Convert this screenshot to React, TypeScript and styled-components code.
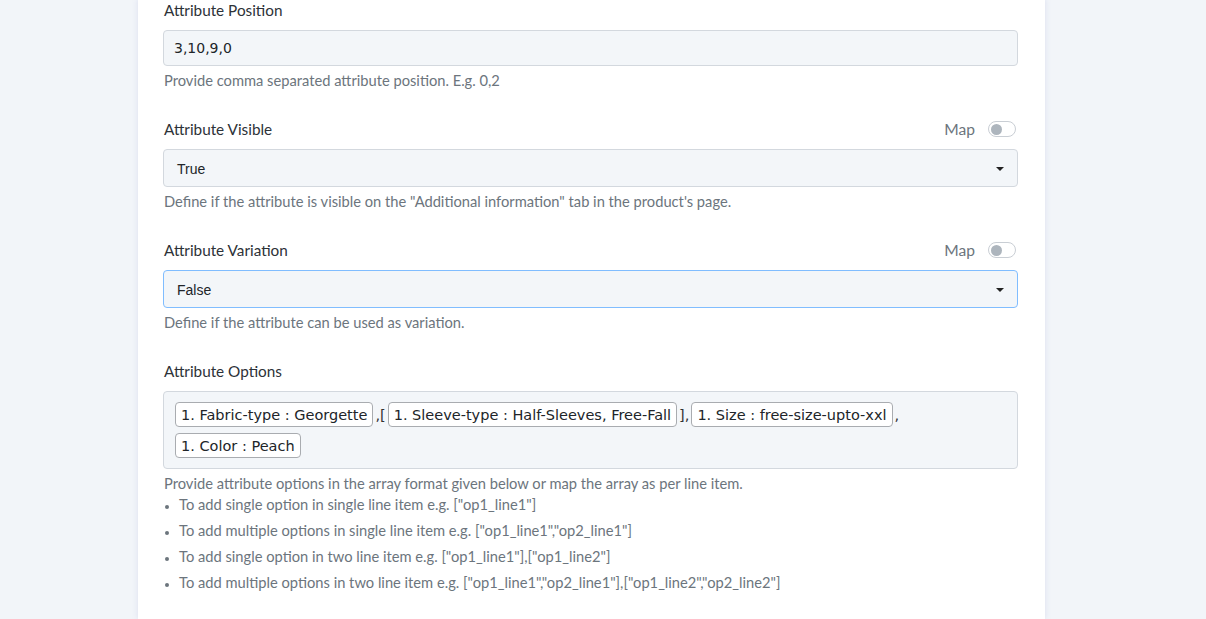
import { Fragment } from "react";
import styled, { createGlobalStyle } from "styled-components";

const GlobalStyle = createGlobalStyle`
  html, body {
    margin: 0;
    padding: 0;
    background: #f2f5f9;
    font-family: Lato, "Open Sans", Arial, sans-serif;
    overflow: hidden;
  }
  * {
    box-sizing: border-box;
  }
`;

const Page = styled.div`
  width: 100%;
  height: 619px;
  display: flex;
`;

const Card = styled.div`
  width: 907px;
  margin-left: 138px;
  margin-top: -1px;
  background: #ffffff;
  box-shadow: 0 0 6px rgba(120, 130, 200, 0.18);
  padding: 0 27px 0 25px;
`;

const Group = styled.div`
  margin-bottom: 27px;
`;

const LabelRow = styled.div`
  display: flex;
  align-items: center;
  justify-content: space-between;
  height: 22px;
  margin-bottom: 9px;
`;

const Label = styled.label`
  font-size: 15.3px;
  line-height: 22px;
  color: #2d3238;
  padding-left: 1px;
`;

const MapSwitch = styled.div`
  display: flex;
  align-items: center;
  gap: 13px;
  padding-right: 2px;
  font-size: 15.6px;
  color: #6c757d;
`;

const Track = styled.span`
  width: 28px;
  height: 16px;
  border: 1px solid #c9ced4;
  border-radius: 8px;
  background: #ffffff;
  display: flex;
  align-items: center;
  padding-left: 2px;
`;

const Knob = styled.span`
  width: 11px;
  height: 11px;
  border-radius: 50%;
  background: #adb5bd;
`;

const TextInput = styled.div`
  height: 36px;
  display: flex;
  align-items: center;
  padding: 0 10px;
  border: 1px solid #d3d8de;
  border-radius: 4px;
  background: #f3f6f9;
  font-family: "DejaVu Sans", Verdana, sans-serif;
  font-size: 14px;
  color: #212529;
`;

const Select = styled.div<{ $focused?: boolean }>`
  height: 38px;
  display: flex;
  align-items: center;
  justify-content: space-between;
  padding: 1px 13px 0 13px;
  border: 1px solid ${({ $focused }) => ($focused ? "#80bdff" : "#d3d8de")};
  border-radius: 4px;
  background: #f3f6f9;
  font-family: "Liberation Sans", Arial, sans-serif;
  font-size: 14px;
  color: #212529;
`;

const Caret = styled.span`
  width: 0;
  height: 0;
  border-left: 4px solid transparent;
  border-right: 4px solid transparent;
  border-top: 4px solid #222;
`;

const Help = styled.div`
  margin-top: 4px;
  font-size: 14.7px;
  line-height: 21px;
  color: #6c757d;
  padding-left: 1px;
`;

const TagBox = styled.div`
  min-height: 78px;
  border: 1px solid #d3d8de;
  border-radius: 4px;
  background: #f3f6f9;
  padding: 10px 11px;
  display: flex;
  flex-wrap: wrap;
  align-items: center;
  align-content: flex-start;
  column-gap: 2px;
  row-gap: 6px;
  font-family: "DejaVu Sans", Verdana, sans-serif;
  font-size: 14.5px;
  color: #212529;
`;

const Tag = styled.span`
  height: 25px;
  display: inline-flex;
  align-items: center;
  padding: 0 5px;
  border: 1px solid #a9acb0;
  border-radius: 4px;
  background: #ffffff;
`;

const Sep = styled.span`
  color: #333;
`;

const List = styled.ul`
  margin: 0;
  padding-left: 16px;
  font-size: 14.7px;
  line-height: 21px;
  color: #6c757d;
`;

const Item = styled.li`
  margin-bottom: 5px;
  &::marker {
    font-size: 11px;
  }
`;

function SwitchLabel() {
  return (
    <MapSwitch>
      Map
      <Track>
        <Knob />
      </Track>
    </MapSwitch>
  );
}

const tags: { text: string; after: string }[] = [
  { text: "1. Fabric-type : Georgette", after: ",[" },
  { text: "1. Sleeve-type : Half-Sleeves, Free-Fall", after: "]," },
  { text: "1. Size : free-size-upto-xxl", after: "," },
  { text: "1. Color : Peach", after: "" },
];

const examples = [
  'To add single option in single line item e.g. ["op1_line1"]',
  'To add multiple options in single line item e.g. ["op1_line1","op2_line1"]',
  'To add single option in two line item e.g. ["op1_line1"],["op1_line2"]',
  'To add multiple options in two line item e.g. ["op1_line1","op2_line1"],["op1_line2","op2_line2"]',
];

export default function App() {
  return (
    <>
      <GlobalStyle />
      <Page>
        <Card>
          <Group>
            <LabelRow>
              <Label>Attribute Position</Label>
            </LabelRow>
            <TextInput>3,10,9,0</TextInput>
            <Help>Provide comma separated attribute position. E.g. 0,2</Help>
          </Group>

          <Group>
            <LabelRow>
              <Label>Attribute Visible</Label>
              <SwitchLabel />
            </LabelRow>
            <Select>
              True
              <Caret />
            </Select>
            <Help>
              Define if the attribute is visible on the "Additional information" tab in the
              product's page.
            </Help>
          </Group>

          <Group>
            <LabelRow>
              <Label>Attribute Variation</Label>
              <SwitchLabel />
            </LabelRow>
            <Select $focused>
              False
              <Caret />
            </Select>
            <Help>Define if the attribute can be used as variation.</Help>
          </Group>

          <Group>
            <LabelRow>
              <Label>Attribute Options</Label>
            </LabelRow>
            <TagBox>
              {tags.map((t) => (
                <Fragment key={t.text}>
                  <Tag>{t.text}</Tag>
                  {t.after ? <Sep>{t.after}</Sep> : null}
                </Fragment>
              ))}
            </TagBox>
            <Help>
              Provide attribute options in the array format given below or map the array as per
              line item.
            </Help>
            <List>
              {examples.map((e) => (
                <Item key={e}>{e}</Item>
              ))}
            </List>
          </Group>
        </Card>
      </Page>
    </>
  );
}
